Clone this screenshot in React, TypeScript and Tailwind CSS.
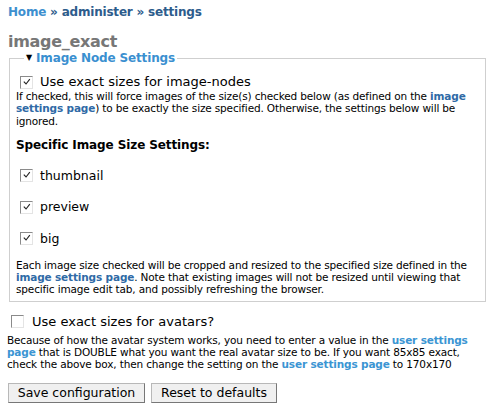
import React from "react";

function Box({ checked }: { checked?: boolean }) {
  return (
    <span className="relative inline-block h-[13px] w-[13px] shrink-0 border border-t-[#8a8a8a] border-l-[#8a8a8a] border-r-[#e4e4e4] border-b-[#e4e4e4] bg-white">
      {checked ? (
        <svg viewBox="0 0 10 10" className="absolute left-[2px] top-[1px] h-[8px] w-[8px]">
          <path d="M1 4.5 L3.8 7.5 L8.5 1.5" fill="none" stroke="#222" strokeWidth="1.4" />
        </svg>
      ) : null}
    </span>
  );
}

function A({ children, light }: { children: React.ReactNode; light?: boolean }) {
  return (
    <a className={light ? "font-bold text-[#3b95d3] no-underline" : "font-bold text-[#2f6aa6] no-underline"}>
      {children}
    </a>
  );
}

function SizeRow({ label }: { label: string }) {
  return (
    <label className="flex h-[16px] items-center gap-[7px] pl-[4px] text-[12.5px] leading-[16px] text-black">
      <Box checked />
      {label}
    </label>
  );
}

export default function App() {
  return (
    <div className="h-[408px] w-[495px] overflow-hidden bg-white font-['DejaVu_Sans',Verdana,sans-serif] text-black">
      <div className="px-[8px] pt-[4px] text-[12px] font-bold leading-[16px] tracking-[-0.2px] text-[#2d5c8c]">
        <span className="text-[#3d8fcf]">Home</span> » administer » settings
      </div>
      <h1 className="mt-[12px] pl-[8px] text-[16px] font-bold leading-[20px] tracking-[-0.3px] text-[#777]">image_exact</h1>
      <fieldset className="mx-[9px] -mt-[2px] border border-[#cfcfcf] px-[6px] pb-[5px]">
        <legend className="ml-[8px] flex items-center gap-[4px] px-[2px] text-[12px] font-bold leading-[16px] tracking-[-0.15px] text-[#3a8fd0]">
          <span className="text-[8px] text-black">▼</span>
          Image Node Settings
        </legend>
        <label className="mt-[8px] flex h-[16px] items-center gap-[7px] pl-[4px] text-[13px] leading-[16px]">
          <Box checked />
          Use exact sizes for image-nodes
        </label>
        <p className="text-[10.5px] leading-[12.3px] tracking-[-0.15px]">
          If checked, this will force images of the size(s) checked below (as defined on the <A>image settings page</A>) to be exactly the size specified. Otherwise, the settings below will be ignored.
        </p>
        <h3 className="mt-[10px] text-[12px] font-bold leading-[16px] tracking-[-0.1px]">Specific Image Size Settings:</h3>
        <div className="mt-[15px] flex flex-col gap-[15.5px]">
          <SizeRow label="thumbnail" />
          <SizeRow label="preview" />
          <SizeRow label="big" />
        </div>
        <p className="mt-[12px] text-[10.5px] leading-[12.3px] tracking-[-0.15px]">
          Each image size checked will be cropped and resized to the specified size defined in the <A>image settings page</A>. Note that existing images will not be resized until viewing that specific image edit tab, and possibly refreshing the browser.
        </p>
      </fieldset>
      <div className="px-[7px]">
        <label className="mt-[12px] flex h-[16px] items-center gap-[8px] pl-[4px] text-[13px] leading-[16px]">
          <Box />
          Use exact sizes for avatars?
        </label>
        <p className="mt-[4px] text-[10.5px] leading-[12.3px] tracking-[-0.15px]">
          Because of how the avatar system works, you need to enter a value in the <A light>user settings page</A> that is DOUBLE what you want the real avatar size to be. If you want 85x85 exact, check the above box, then change the setting on the <A light>user settings page</A> to 170x170
        </p>
        <div className="mt-[12px] flex gap-[6px] pl-[1px]">
          <button className="h-[20px] w-[137px] border border-[#b8b8b8] border-r-[#777] border-b-[#777] bg-[#f0f0f0] text-[12.5px] leading-[18px]">
            Save configuration
          </button>
          <button className="h-[20px] w-[126px] border border-[#b8b8b8] border-r-[#777] border-b-[#777] bg-[#f0f0f0] text-[12.5px] leading-[18px]">
            Reset to defaults
          </button>
        </div>
      </div>
    </div>
  );
}
